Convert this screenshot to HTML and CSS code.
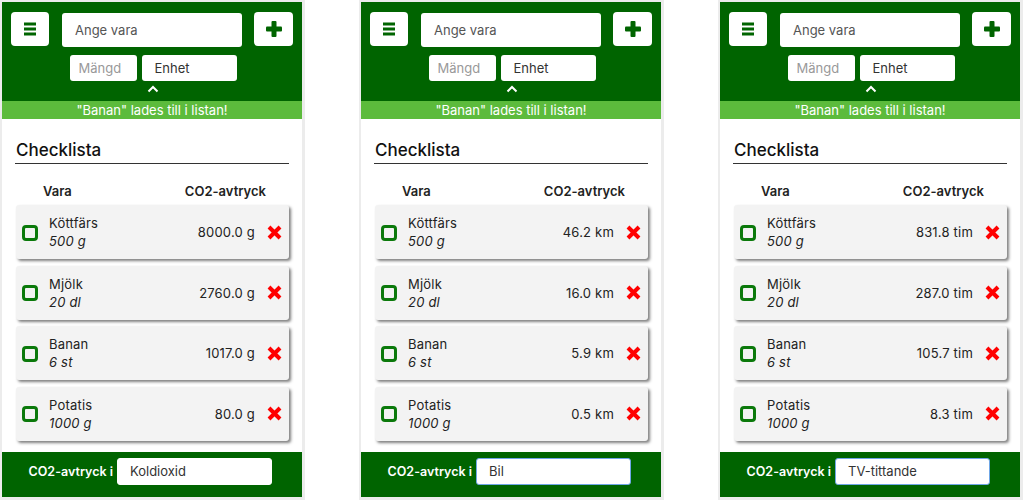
FILE: index.html
```html
<!DOCTYPE html>
<html lang="sv">
<head>
    <meta charset="UTF-8">
    <meta name="viewport" content="width=device-width, initial-scale=1.0">
    <title>Checklista CO2</title>
    <link rel="stylesheet" href="styles.css">
</head>
<body>
    <div class="screens">

        <!-- Koldioxid -->
        <div class="phone">
            <div class="top">
                <div class="row">
                    <button class="icon_btn"><svg width="16" height="14" viewBox="0 0 16 14"><rect x="2" y="0.5" width="12" height="3" fill="#006400"/><rect x="2" y="5.5" width="12" height="3" fill="#006400"/><rect x="2" y="10.5" width="12" height="3" fill="#006400"/></svg></button>
                    <input class="item_input" type="text" placeholder="Ange vara">
                    <button class="icon_btn"><svg width="16" height="16" viewBox="0 0 16 16"><rect x="5.5" y="0" width="5" height="16" rx="1" fill="#006400"/><rect x="0" y="5.5" width="16" height="5" rx="1" fill="#006400"/></svg></button>
                </div>
                <div class="row2">
                    <input class="amount" type="text" placeholder="Mängd">
                    <div class="unit">Enhet</div>
                </div>
                <div class="chevron"><svg width="12" height="8" viewBox="0 0 12 8"><polyline points="1.5,6.5 6,2 10.5,6.5" fill="none" stroke="#fff" stroke-width="2"/></svg></div>
            </div>
            <div class="notice">"Banan" lades till i listan!</div>
            <div class="content">
                <h2 class="title">Checklista</h2>
                <div class="head_row"><span>Vara</span><span>CO2-avtryck</span></div>
                <div class="card"><span class="box"></span><div class="name">Köttfärs<i>500 g</i></div><span class="value">8000.0 g</span><svg class="del" width="15" height="15" viewBox="0 0 15 15"><path d="M2 2 L13 13 M13 2 L2 13" stroke="#f00" stroke-width="4"/></svg></div>
                <div class="card"><span class="box"></span><div class="name">Mjölk<i>20 dl</i></div><span class="value">2760.0 g</span><svg class="del" width="15" height="15" viewBox="0 0 15 15"><path d="M2 2 L13 13 M13 2 L2 13" stroke="#f00" stroke-width="4"/></svg></div>
                <div class="card"><span class="box"></span><div class="name">Banan<i>6 st</i></div><span class="value">1017.0 g</span><svg class="del" width="15" height="15" viewBox="0 0 15 15"><path d="M2 2 L13 13 M13 2 L2 13" stroke="#f00" stroke-width="4"/></svg></div>
                <div class="card"><span class="box"></span><div class="name">Potatis<i>1000 g</i></div><span class="value">80.0 g</span><svg class="del" width="15" height="15" viewBox="0 0 15 15"><path d="M2 2 L13 13 M13 2 L2 13" stroke="#f00" stroke-width="4"/></svg></div>
            </div>
            <div class="bottom">
                <label>CO2-avtryck i</label>
                <div class="choice">Koldioxid</div>
            </div>
        </div>

        <!-- Bil -->
        <div class="phone">
            <div class="top">
                <div class="row">
                    <button class="icon_btn"><svg width="16" height="14" viewBox="0 0 16 14"><rect x="2" y="0.5" width="12" height="3" fill="#006400"/><rect x="2" y="5.5" width="12" height="3" fill="#006400"/><rect x="2" y="10.5" width="12" height="3" fill="#006400"/></svg></button>
                    <input class="item_input" type="text" placeholder="Ange vara">
                    <button class="icon_btn"><svg width="16" height="16" viewBox="0 0 16 16"><rect x="5.5" y="0" width="5" height="16" rx="1" fill="#006400"/><rect x="0" y="5.5" width="16" height="5" rx="1" fill="#006400"/></svg></button>
                </div>
                <div class="row2">
                    <input class="amount" type="text" placeholder="Mängd">
                    <div class="unit">Enhet</div>
                </div>
                <div class="chevron"><svg width="12" height="8" viewBox="0 0 12 8"><polyline points="1.5,6.5 6,2 10.5,6.5" fill="none" stroke="#fff" stroke-width="2"/></svg></div>
            </div>
            <div class="notice">"Banan" lades till i listan!</div>
            <div class="content">
                <h2 class="title">Checklista</h2>
                <div class="head_row"><span>Vara</span><span>CO2-avtryck</span></div>
                <div class="card"><span class="box"></span><div class="name">Köttfärs<i>500 g</i></div><span class="value">46.2 km</span><svg class="del" width="15" height="15" viewBox="0 0 15 15"><path d="M2 2 L13 13 M13 2 L2 13" stroke="#f00" stroke-width="4"/></svg></div>
                <div class="card"><span class="box"></span><div class="name">Mjölk<i>20 dl</i></div><span class="value">16.0 km</span><svg class="del" width="15" height="15" viewBox="0 0 15 15"><path d="M2 2 L13 13 M13 2 L2 13" stroke="#f00" stroke-width="4"/></svg></div>
                <div class="card"><span class="box"></span><div class="name">Banan<i>6 st</i></div><span class="value">5.9 km</span><svg class="del" width="15" height="15" viewBox="0 0 15 15"><path d="M2 2 L13 13 M13 2 L2 13" stroke="#f00" stroke-width="4"/></svg></div>
                <div class="card"><span class="box"></span><div class="name">Potatis<i>1000 g</i></div><span class="value">0.5 km</span><svg class="del" width="15" height="15" viewBox="0 0 15 15"><path d="M2 2 L13 13 M13 2 L2 13" stroke="#f00" stroke-width="4"/></svg></div>
            </div>
            <div class="bottom">
                <label>CO2-avtryck i</label>
                <div class="choice focused">Bil</div>
            </div>
        </div>

        <!-- TV-tittande -->
        <div class="phone">
            <div class="top">
                <div class="row">
                    <button class="icon_btn"><svg width="16" height="14" viewBox="0 0 16 14"><rect x="2" y="0.5" width="12" height="3" fill="#006400"/><rect x="2" y="5.5" width="12" height="3" fill="#006400"/><rect x="2" y="10.5" width="12" height="3" fill="#006400"/></svg></button>
                    <input class="item_input" type="text" placeholder="Ange vara">
                    <button class="icon_btn"><svg width="16" height="16" viewBox="0 0 16 16"><rect x="5.5" y="0" width="5" height="16" rx="1" fill="#006400"/><rect x="0" y="5.5" width="16" height="5" rx="1" fill="#006400"/></svg></button>
                </div>
                <div class="row2">
                    <input class="amount" type="text" placeholder="Mängd">
                    <div class="unit">Enhet</div>
                </div>
                <div class="chevron"><svg width="12" height="8" viewBox="0 0 12 8"><polyline points="1.5,6.5 6,2 10.5,6.5" fill="none" stroke="#fff" stroke-width="2"/></svg></div>
            </div>
            <div class="notice">"Banan" lades till i listan!</div>
            <div class="content">
                <h2 class="title">Checklista</h2>
                <div class="head_row"><span>Vara</span><span>CO2-avtryck</span></div>
                <div class="card"><span class="box"></span><div class="name">Köttfärs<i>500 g</i></div><span class="value">831.8 tim</span><svg class="del" width="15" height="15" viewBox="0 0 15 15"><path d="M2 2 L13 13 M13 2 L2 13" stroke="#f00" stroke-width="4"/></svg></div>
                <div class="card"><span class="box"></span><div class="name">Mjölk<i>20 dl</i></div><span class="value">287.0 tim</span><svg class="del" width="15" height="15" viewBox="0 0 15 15"><path d="M2 2 L13 13 M13 2 L2 13" stroke="#f00" stroke-width="4"/></svg></div>
                <div class="card"><span class="box"></span><div class="name">Banan<i>6 st</i></div><span class="value">105.7 tim</span><svg class="del" width="15" height="15" viewBox="0 0 15 15"><path d="M2 2 L13 13 M13 2 L2 13" stroke="#f00" stroke-width="4"/></svg></div>
                <div class="card"><span class="box"></span><div class="name">Potatis<i>1000 g</i></div><span class="value">8.3 tim</span><svg class="del" width="15" height="15" viewBox="0 0 15 15"><path d="M2 2 L13 13 M13 2 L2 13" stroke="#f00" stroke-width="4"/></svg></div>
            </div>
            <div class="bottom">
                <label>CO2-avtryck i</label>
                <div class="choice focused">TV-tittande</div>
            </div>
        </div>

    </div>
</body>
</html>
```
FILE: styles.css
```css
body, html, * {
    box-sizing: border-box;
    margin: 0;
    padding: 0;
}
body {
    font-family: Inter, "Noto Sans", sans-serif;
    background-color: #fff;
    color: #222;
    width: 1024px;
    height: 500px;
    overflow: hidden;
}
.screens {
    display: flex;
    gap: 54px;
}
.phone {
    width: 305px;
    height: 500px;
    border-style: solid;
    border-color: #ececec;
    border-width: 2px 3px 3px 2px;
    display: flex;
    flex-direction: column;
    background-color: #fff;
}
.top {
    height: 99px;
    background-color: #006400;
    padding: 10px 9px 0;
}
.row {
    display: flex;
    align-items: flex-start;
}
.icon_btn {
    width: 38px;
    height: 34px;
    background-color: #fff;
    border: none;
    border-radius: 4px;
    display: flex;
    align-items: center;
    justify-content: center;
}
.icon_btn:last-child {
    width: 39px;
}
.item_input {
    width: 180px;
    height: 34px;
    margin: 1px 12px 0 13px;
    border: none;
    border-radius: 3px;
    padding-left: 13px;
    font-family: inherit;
    font-size: 13px;
}
.item_input::placeholder {
    color: #555;
}
.row2 {
    display: flex;
    justify-content: center;
    gap: 5px;
    margin-top: 8px;
    padding-left: 2px;
}
.amount, .unit {
    height: 26px;
    border: none;
    border-radius: 3px;
    background-color: #fff;
    font-family: inherit;
    font-size: 13px;
}
.amount {
    width: 67px;
    padding-left: 9px;
}
.amount::placeholder {
    color: #999;
}
.unit {
    width: 95px;
    padding-left: 13px;
    line-height: 26px;
    color: #333;
}
.chevron {
    display: flex;
    justify-content: center;
    margin-top: 4px;
    padding-left: 2px;
}
.notice {
    height: 18px;
    background-color: #5cbb3c;
    color: #fff;
    font-size: 13px;
    font-weight: 400;
    text-align: center;
    line-height: 18px;
}
.content {
    height: 333px;
    padding: 20px 13px 0;
}
.title {
    font-size: 17px;
    font-weight: 500;
    color: #111;
    padding-left: 1px;
    line-height: 22px;
    padding-bottom: 2px;
    border-bottom: 1px solid #333;
}
.head_row {
    display: flex;
    justify-content: space-between;
    padding: 20px 23px 6px 28px;
    font-size: 13px;
    font-weight: 600;
    line-height: 15px;
}
.card {
    height: 54px;
    margin: 0 0 6.5px 1px;
    background-color: #f3f3f3;
    border-radius: 3px;
    box-shadow: 2px 2px 3px rgba(0, 0, 0, 0.5);
    display: flex;
    align-items: center;
    padding: 0 7px 0 6px;
    font-size: 13px;
    letter-spacing: 0.2px;
}
.box {
    width: 16px;
    height: 16px;
    border: 3px solid #0b790b;
    border-radius: 4px;
    margin-top: 1px;
}
.name {
    flex: 1;
    display: flex;
    flex-direction: column;
    margin-left: 11px;
    line-height: 18px;
    color: #222;
}
.name i {
    font-style: italic;
}
.value {
    margin-right: 12px;
    color: #222;
}
.bottom {
    height: 45px;
    background-color: #006400;
    display: flex;
    align-items: flex-start;
    justify-content: flex-end;
    gap: 4px;
    padding: 6px 30px 0 0;
}
.bottom label {
    color: #fff;
    font-size: 12.5px;
    font-weight: 600;
    line-height: 28px;
}
.choice {
    width: 155px;
    height: 27px;
    background-color: #fff;
    border-radius: 3px;
    border: 1px solid #fff;
    padding-left: 12px;
    line-height: 25px;
    font-size: 13px;
    color: #333;
}
.choice.focused {
    border-color: #6fa6e6;
}
```
